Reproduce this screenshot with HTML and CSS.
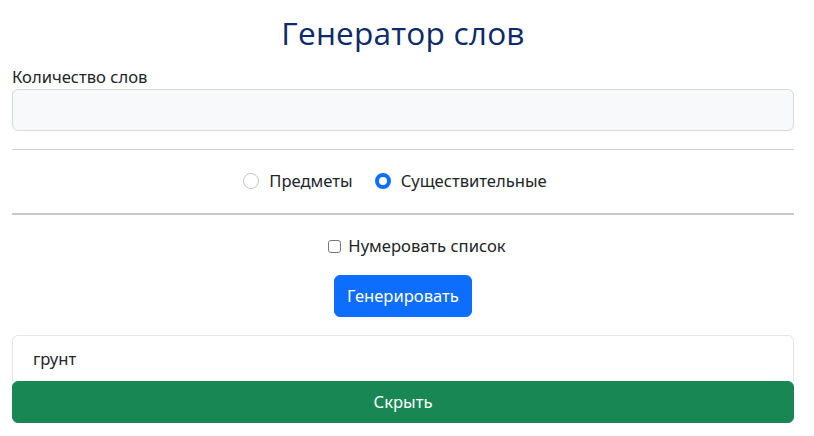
FILE: index.html
```html
<!DOCTYPE html>
<html lang="ru">
<head>
<meta charset="utf-8">
<title>Генератор слов</title>
<link rel="stylesheet" href="styles.css">
</head>
<body>
<main class="page">
  <h1 class="title">Генератор слов</h1>
  <label class="field-label" for="count">Количество слов</label>
  <input class="field-input" id="count" type="text">
  <hr class="rule">
  <div class="radio-row">
    <label class="radio"><span class="radio-mark"></span><span>Предметы</span></label>
    <label class="radio"><span class="radio-mark checked"></span><span>Существительные</span></label>
  </div>
  <hr class="rule rule-strong">
  <div class="check-row">
    <label class="check"><span class="check-mark"></span><span>Нумеровать список</span></label>
  </div>
  <div class="btn-row">
    <button class="btn-primary" type="button">Генерировать</button>
  </div>
  <section class="result">
    <div class="result-item">грунт</div>
    <button class="btn-hide" type="button">Скрыть</button>
  </section>
</main>
</body>
</html>
```
FILE: styles.css
```css
* { box-sizing: border-box; }
html, body { margin: 0; background: #fff; }
body {
  font-family: "Noto Sans", "Open Sans", sans-serif;
  font-size: 16.6px;
  line-height: 24px;
  color: #212529;
}
.page {
  padding: 0 20px 0 12px;
  display: flex;
  flex-direction: column;
}
.title {
  margin: 11px 0 10px;
  text-align: center;
  font-family: "Open Sans", sans-serif;
  font-weight: 500;
  font-size: 31.6px;
  line-height: 44px;
  color: #0c2b68;
  letter-spacing: 0.2px;
}
.field-label {
  display: block;
  line-height: 24px;
  height: 24px;
}
.field-input {
  display: block;
  width: 100%;
  height: 42px;
  margin: 0;
  background: #f8f9fa;
  border: 1px solid #d6d8da;
  border-radius: 6px;
  font: inherit;
}
.rule {
  margin: 18px 0 0;
  border: 0;
  border-top: 1px solid #d3d3d3;
  height: 0;
}
.rule-strong {
  margin-top: 20px;
  border-top: 2px solid #c8c8c8;
}
.radio-row {
  display: flex;
  justify-content: center;
  gap: 22px;
  margin-top: 19px;
  padding-right: 16px;
  height: 24px;
}
.radio, .check {
  display: flex;
  align-items: center;
  gap: 10px;
}
.radio-mark {
  width: 16px;
  height: 16px;
  border-radius: 50%;
  border: 1px solid #c4c4c4;
  background: #fff;
}
.radio-mark.checked {
  border: 4px solid #0d6efd;
  background: #fff;
}
.check-row {
  display: flex;
  justify-content: center;
  margin-top: 19px;
  padding-left: 28px;
  height: 24px;
}
.check { gap: 7px; }
.check-mark {
  width: 13px;
  height: 13px;
  border: 1px solid #767676;
  border-radius: 3px;
  background: #fff;
}
.btn-row {
  display: flex;
  justify-content: center;
  margin-top: 17px;
}
.btn-primary {
  height: 42px;
  padding: 0 12.5px;
  background: #0d6efd;
  color: #fff;
  border: 1px solid #0d6efd;
  border-radius: 6px;
  font: inherit;
}
.result {
  margin-top: 18px;
  display: flex;
  flex-direction: column;
}
.result-item {
  height: 46px;
  padding: 11px 20px;
  border: 1px solid #e3e5e8;
  border-bottom: 0;
  border-radius: 6px 6px 0 0;
}
.btn-hide {
  height: 42px;
  background: #198754;
  color: #fff;
  border: 1px solid #198754;
  border-radius: 6px;
  font: inherit;
}
```
